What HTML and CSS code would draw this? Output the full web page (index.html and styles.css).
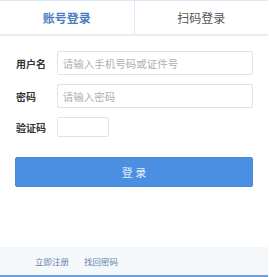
FILE: index.html
```html
<!DOCTYPE html>
<html lang="zh">
<head>
<meta charset="utf-8">
<link rel="stylesheet" href="styles.css">
</head>
<body>
<div class="panel">
  <div class="tabs">
    <div class="tab active">账号登录</div>
    <div class="tab">扫码登录</div>
  </div>
  <div class="form">
    <div class="row">
      <label class="label">用户名</label>
      <input class="input" type="text" placeholder="请输入手机号码或证件号">
    </div>
    <div class="row">
      <label class="label">密码</label>
      <input class="input" type="password" placeholder="请输入密码">
    </div>
    <div class="row short">
      <label class="label">验证码</label>
      <input class="input small" type="text">
    </div>
    <button class="btn">登 录</button>
  </div>
  <div class="footer">
    <a class="link">立即注册</a>
    <a class="link">找回密码</a>
  </div>
</div>
</body>
</html>
```
FILE: styles.css
```css
html, body {
  margin: 0;
  padding: 0;
  background: #fff;
}
body {
  font-family: "Noto Sans CJK SC", "Noto Sans", sans-serif;
  width: 269px;
  height: 277px;
  overflow: hidden;
}
.panel {
  width: 268px;
  height: 277px;
  display: flex;
  flex-direction: column;
}
.tabs {
  display: flex;
  height: 36px;
  border-top: 1px solid #dde7f5;
  border-bottom: 2px solid #e6edf7;
  box-sizing: border-box;
}
.tab {
  flex: 1;
  display: flex;
  align-items: center;
  justify-content: center;
  font-size: 12px;
  color: #555;
}
.tab.active {
  color: #4a7cc2;
  font-weight: bold;
  border-right: 1px solid #e1e9f5;
}
.form {
  padding: 15px 15px 0 15px;
  display: flex;
  flex-direction: column;
  gap: 9px;
  flex: 1;
}
.row {
  display: flex;
  align-items: center;
  height: 24px;
}
.row.short { height: 20px; }
.label {
  width: 42px;
  padding-left: 1px;
  box-sizing: border-box;
  font-size: 10px;
  font-weight: bold;
  color: #333;
}
.input {
  width: 197px;
  height: 24px;
  box-sizing: border-box;
  border: 1px solid #e2e2e2;
  border-radius: 2px;
  padding: 0 5px;
  font-family: inherit;
  font-size: 10.5px;
  color: #333;
  outline: none;
}
.input::placeholder { color: #b0b0b0; }
.input.small {
  width: 52px;
  height: 20px;
}
.btn {
  margin-top: 11px;
  height: 30px;
  width: 238px;
  border: 1px solid #4a8ad8;
  border-radius: 2px;
  background: #4a8fe2;
  color: #e3edfb;
  font-family: inherit;
  font-size: 11px;
}
.footer {
  height: 30px;
  background: #f4f8fa;
  border-bottom: 2px solid #6da0e0;
  box-sizing: border-box;
  display: flex;
  align-items: center;
  padding-left: 35px;
  gap: 15px;
}
.link {
  font-size: 8.5px;
  color: #6582ac;
}
```
